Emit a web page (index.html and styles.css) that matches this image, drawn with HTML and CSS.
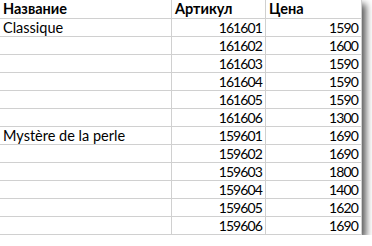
FILE: index.html
```html
<!DOCTYPE html>
<html lang="ru">
<head>
<meta charset="utf-8">
<title>Sheet</title>
<link rel="stylesheet" href="styles.css">
</head>
<body>
<div class="sheet">
  <div class="row head"><div class="c name">Название</div><div class="c art">Артикул</div><div class="c price">Цена</div></div>
  <div class="row"><div class="c name">Classique</div><div class="c art num">161601</div><div class="c price num">1590</div></div>
  <div class="row"><div class="c name"></div><div class="c art num">161602</div><div class="c price num">1600</div></div>
  <div class="row"><div class="c name"></div><div class="c art num">161603</div><div class="c price num">1590</div></div>
  <div class="row"><div class="c name"></div><div class="c art num">161604</div><div class="c price num">1590</div></div>
  <div class="row"><div class="c name"></div><div class="c art num">161605</div><div class="c price num">1590</div></div>
  <div class="row"><div class="c name"></div><div class="c art num">161606</div><div class="c price num">1300</div></div>
  <div class="row"><div class="c name">Mystère de la perle</div><div class="c art num">159601</div><div class="c price num">1690</div></div>
  <div class="row"><div class="c name"></div><div class="c art num">159602</div><div class="c price num">1690</div></div>
  <div class="row"><div class="c name"></div><div class="c art num">159603</div><div class="c price num">1800</div></div>
  <div class="row"><div class="c name"></div><div class="c art num">159604</div><div class="c price num">1400</div></div>
  <div class="row"><div class="c name"></div><div class="c art num">159605</div><div class="c price num">1620</div></div>
  <div class="row"><div class="c name"></div><div class="c art num">159606</div><div class="c price num">1690</div></div>
</div>
</body>
</html>
```
FILE: styles.css
```css
html, body {
  margin: 0;
  padding: 0;
  background: #ffffff;
}
.sheet {
  width: 362px;
  background: #ffffff;
  box-shadow: 4px 4px 7px rgba(0, 0, 0, 0.65);
  font-family: Lato, "Liberation Sans", sans-serif;
  font-size: 14.5px;
  color: #000000;
}
.row {
  display: grid;
  grid-template-columns: 172px 94px 96px;
  height: 18px;
}
.head {
  height: 19px;
}
.c {
  box-sizing: border-box;
  height: 100%;
  border-right: 1px solid #d0d0d0;
  border-bottom: 1px solid #d0d0d0;
  padding: 0 2px 0 3px;
  line-height: 17px;
  white-space: nowrap;
  overflow: hidden;
}
.head .c {
  font-weight: bold;
  line-height: 18px;
}
.num {
  text-align: right;
  font-size: 14px;
  letter-spacing: -0.9px;
  padding-right: 3px;
}
```
